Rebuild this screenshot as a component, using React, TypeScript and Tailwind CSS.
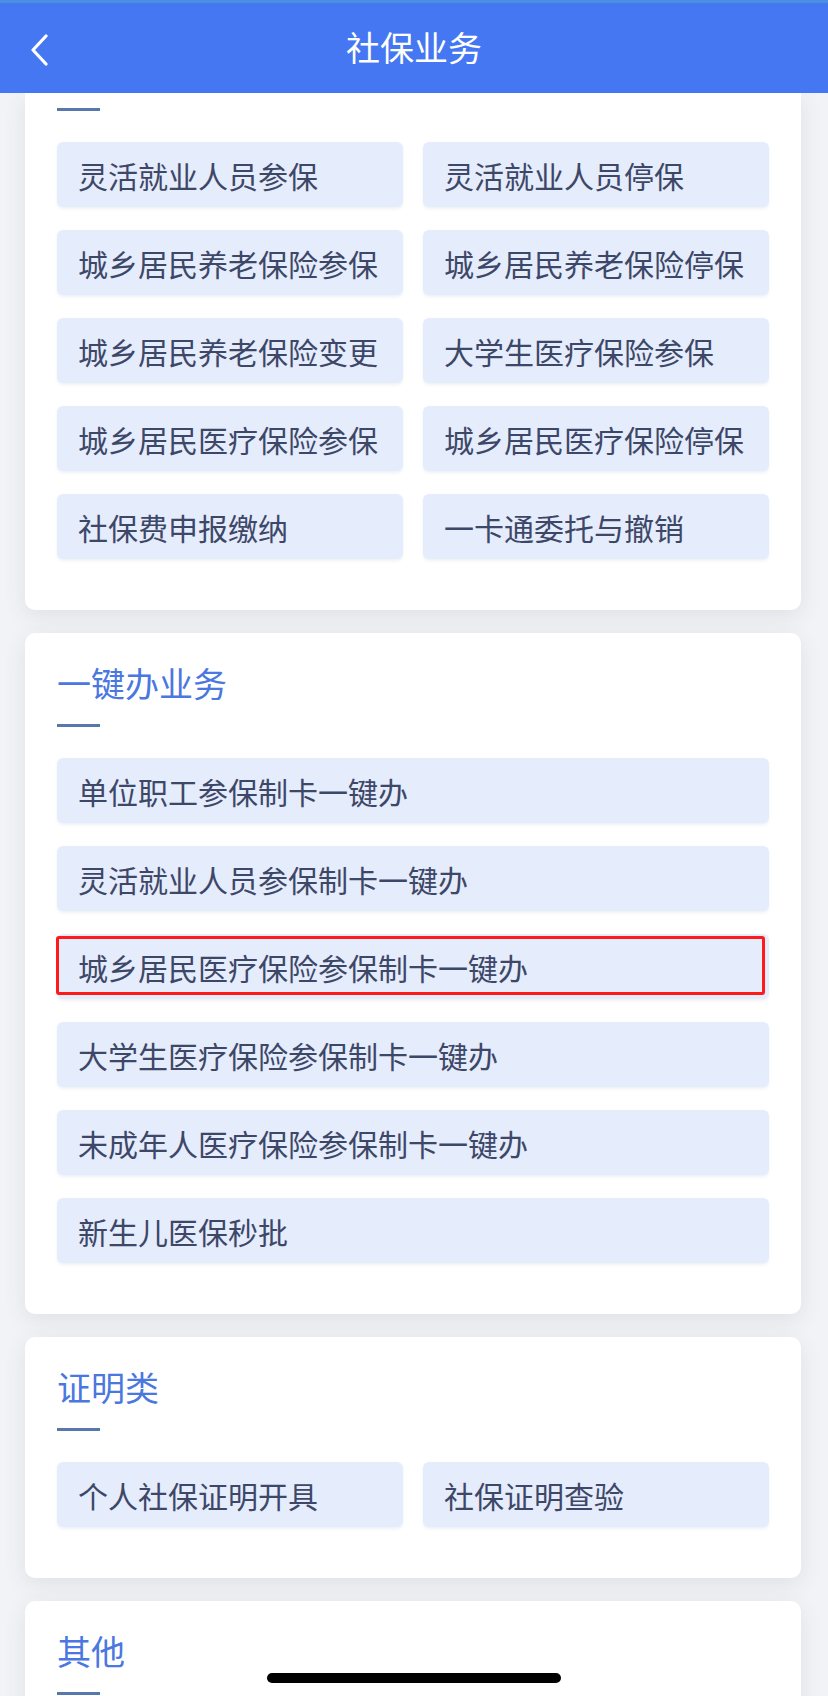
import React from "react";

const FONT = { fontFamily: '"Noto Sans CJK SC", "Noto Sans", sans-serif' };

function Btn({ label, marked }: { label: string; marked?: boolean }) {
  return (
    <div className="relative h-[65px] rounded-[6px] bg-[#e5ecfb] shadow-[0_2px_3px_rgba(120,140,180,0.12)] flex items-center pl-[21px]">
      <span className="text-[30px] leading-none text-[#3d4768] whitespace-nowrap">{label}</span>
      {marked && (
        <div className="absolute left-[-1px] right-[4px] top-[2px] bottom-[4px] border-[3px] border-[#ff1a1a] rounded-[3px]" />
      )}
    </div>
  );
}

function Line() {
  return <div className="w-[43px] h-[3px] bg-[#5878ad]" />;
}

function Card({ title, children, cut }: { title?: string; children: React.ReactNode; cut?: boolean }) {
  return (
    <div
      className={
        "bg-white shadow-[0_6px_22px_rgba(60,70,100,0.10)] px-[32px] pb-[51px] " +
        (cut ? "rounded-b-[10px] pt-[15px]" : "rounded-[10px] pt-[33px]")
      }
    >
      {title && (
        <div className="text-[34px] leading-[34px] text-[#4a77e0] mb-[24px]">{title}</div>
      )}
      <Line />
      <div className="mt-[31px]">{children}</div>
    </div>
  );
}

export default function App() {
  const c1 = [
    "灵活就业人员参保",
    "灵活就业人员停保",
    "城乡居民养老保险参保",
    "城乡居民养老保险停保",
    "城乡居民养老保险变更",
    "大学生医疗保险参保",
    "城乡居民医疗保险参保",
    "城乡居民医疗保险停保",
    "社保费申报缴纳",
    "一卡通委托与撤销",
  ];
  const c2 = [
    "单位职工参保制卡一键办",
    "灵活就业人员参保制卡一键办",
    "城乡居民医疗保险参保制卡一键办",
    "大学生医疗保险参保制卡一键办",
    "未成年人医疗保险参保制卡一键办",
    "新生儿医保秒批",
  ];
  return (
    <div className="relative w-[828px] h-[1696px] overflow-hidden bg-[#f2f3f6]" style={FONT}>
      <div className="h-[93px] bg-[#4477f1] border-t-[3px] border-[#4a8fe2] relative flex items-center justify-center">
        <svg className="absolute left-[28px] top-[31px]" width="22" height="32" viewBox="0 0 22 32">
          <path d="M18 2 L5 16 L18 30" fill="none" stroke="white" strokeWidth="3.2" strokeLinecap="round" strokeLinejoin="round" />
        </svg>
        <span className="text-[34px] leading-none text-white -mt-[3px]">社保业务</span>
      </div>
      <div className="px-[25px] pr-[27px] flex flex-col gap-[23px]">
        <Card cut>
          <div className="grid grid-cols-2 gap-x-[20px] gap-y-[23px]">
            {c1.map((t) => (
              <Btn key={t} label={t} />
            ))}
          </div>
        </Card>
        <Card title="一键办业务">
          <div className="flex flex-col gap-[23px]">
            {c2.map((t, i) => (
              <Btn key={t} label={t} marked={i === 2} />
            ))}
          </div>
        </Card>
        <Card title="证明类">
          <div className="grid grid-cols-2 gap-x-[20px] gap-y-[23px]">
            <Btn label="个人社保证明开具" />
            <Btn label="社保证明查验" />
          </div>
        </Card>
        <Card title="其他">
          <div className="h-[200px]" />
        </Card>
      </div>
      <div className="absolute left-[267px] top-[1673px] w-[294px] h-[10px] rounded-full bg-black" />
    </div>
  );
}
